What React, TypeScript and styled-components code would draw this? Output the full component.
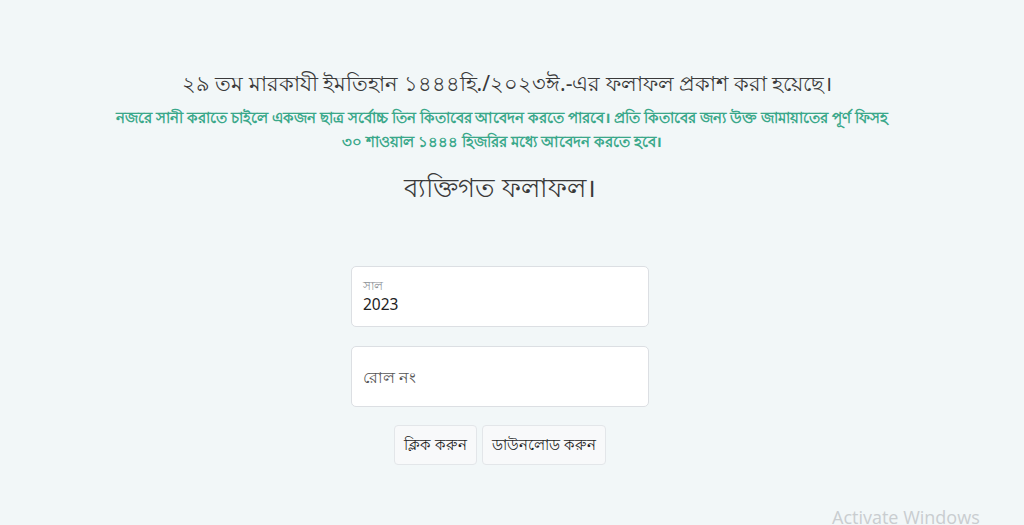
import React from "react";
import styled, { createGlobalStyle } from "styled-components";

const GlobalStyle = createGlobalStyle`
  html, body {
    margin: 0;
    padding: 0;
    background: #f2f7f8;
    font-family: "Noto Sans", "Liberation Sans", sans-serif;
    color: #333;
  }
  * { box-sizing: border-box; }
`;

const Page = styled.div`
  position: relative;
  height: 525px;
  overflow: hidden;
  display: flex;
  flex-direction: column;
  align-items: center;
  padding-top: 68px;
`;

const Title = styled.h2`
  margin: 0 0 0 -10px;
  font-size: 21px;
  font-weight: 400;
  color: #3a3a3a;
  text-align: center;
`;

const Notice = styled.p`
  margin: 2px 20px 0 0;
  width: 790px;
  font-size: 15px;
  font-weight: 700;
  line-height: 24px;
  color: #3aa88a;
  text-align: center;
`;

const Heading = styled.h1`
  margin: 15px 24px 0 0;
  font-size: 26px;
  font-weight: 400;
  color: #3a3a3a;
`;

const Form = styled.form`
  margin: 54px 24px 0 0;
  width: 298px;
  display: flex;
  flex-direction: column;
  align-items: center;
  gap: 19px;
`;

const Field = styled.label`
  width: 100%;
  height: 61px;
  background: #fff;
  border: 1px solid #dcdfe3;
  border-radius: 5px;
  display: flex;
  flex-direction: column;
  justify-content: center;
  padding: 0 11px;
`;

const FloatLabel = styled.span`
  font-size: 12px;
  color: #8a8f94;
  line-height: 15px;
`;

const Value = styled.span<{ $placeholder?: boolean }>`
  font-size: 15.5px;
  line-height: 22px;
  color: ${(p) => (p.$placeholder ? "#555" : "#222")};
`;

const Buttons = styled.div`
  display: flex;
  gap: 5px;
  margin-top: -1px;
`;

const Button = styled.button`
  height: 40px;
  padding: 0 9px;
  background: #f8f9fa;
  border: 1px solid #e3e6e9;
  border-radius: 4px;
  font-family: "Noto Sans", "Liberation Sans", sans-serif;
  font-size: 15px;
  color: #222;
  cursor: pointer;
`;

const Watermark = styled.div`
  position: absolute;
  left: 832px;
  top: 505px;
  font-family: "Open Sans", "Liberation Sans", sans-serif;
  font-size: 18px;
  color: #c9cdd0;
`;

export default function App() {
  return (
    <>
      <GlobalStyle />
      <Page>
        <Title>২৯ তম মারকাযী ইমতিহান ১৪৪৪হি./২০২৩ঈ.-এর ফলাফল প্রকাশ করা হয়েছে।</Title>
        <Notice>
          নজরে সানী করাতে চাইলে একজন ছাত্র সর্বোচ্চ তিন কিতাবের আবেদন করতে পারবে। প্রতি কিতাবের জন্য উক্ত জামায়াতের পূর্ণ ফিসহ ৩০ শাওয়াল ১৪৪৪ হিজরির মধ্যে আবেদন করতে হবে।
        </Notice>
        <Heading>ব্যক্তিগত ফলাফল।</Heading>
        <Form onSubmit={(e) => e.preventDefault()}>
          <Field>
            <FloatLabel>সাল</FloatLabel>
            <Value>2023</Value>
          </Field>
          <Field>
            <Value $placeholder>রোল নং</Value>
          </Field>
          <Buttons>
            <Button type="button">ক্লিক করুন</Button>
            <Button type="button">ডাউনলোড করুন</Button>
          </Buttons>
        </Form>
        <Watermark>Activate Windows</Watermark>
      </Page>
    </>
  );
}
